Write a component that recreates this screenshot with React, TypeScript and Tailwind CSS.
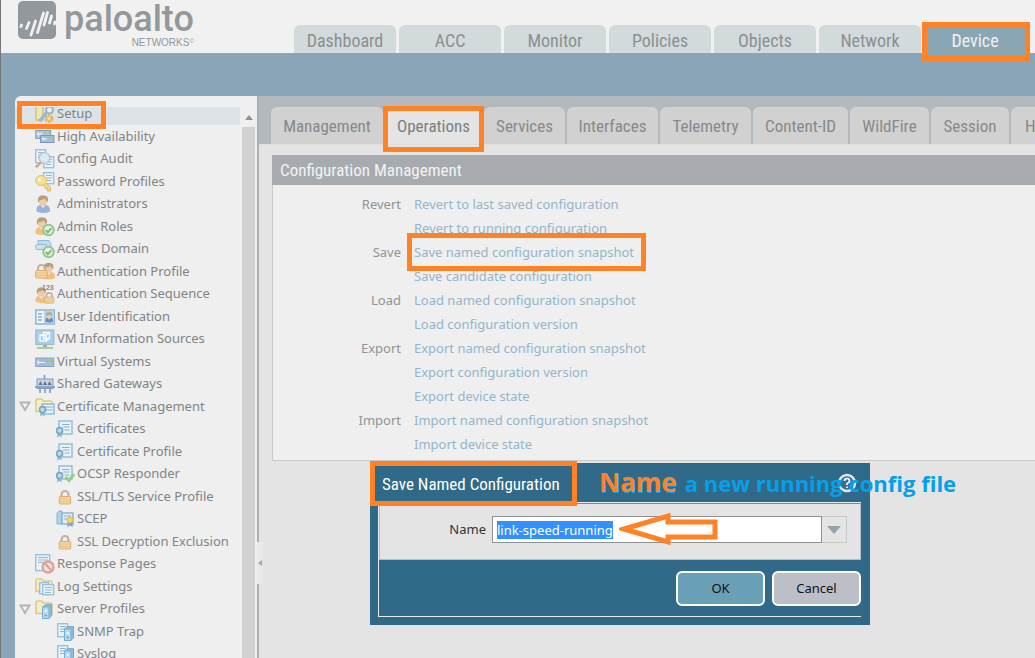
import React, { useEffect, useRef } from 'react';
import clsx from 'clsx';

type IconName =
  | 'setup' | 'ha' | 'audit' | 'password' | 'admin' | 'roles' | 'domain' | 'authProfile'
  | 'authSequence' | 'userId' | 'vm' | 'vsys' | 'gateways' | 'certFolder' | 'cert' | 'ocsp'
  | 'lock' | 'scep' | 'response' | 'log' | 'serverFolder' | 'trap';

interface TreeNode {
  label: string;
  icon: IconName;
  child?: boolean;
  open?: boolean;
}

const tree: TreeNode[] = [
  { label: 'Setup', icon: 'setup' },
  { label: 'High Availability', icon: 'ha' },
  { label: 'Config Audit', icon: 'audit' },
  { label: 'Password Profiles', icon: 'password' },
  { label: 'Administrators', icon: 'admin' },
  { label: 'Admin Roles', icon: 'roles' },
  { label: 'Access Domain', icon: 'domain' },
  { label: 'Authentication Profile', icon: 'authProfile' },
  { label: 'Authentication Sequence', icon: 'authSequence' },
  { label: 'User Identification', icon: 'userId' },
  { label: 'VM Information Sources', icon: 'vm' },
  { label: 'Virtual Systems', icon: 'vsys' },
  { label: 'Shared Gateways', icon: 'gateways' },
  { label: 'Certificate Management', icon: 'certFolder', open: true },
  { label: 'Certificates', icon: 'cert', child: true },
  { label: 'Certificate Profile', icon: 'cert', child: true },
  { label: 'OCSP Responder', icon: 'ocsp', child: true },
  { label: 'SSL/TLS Service Profile', icon: 'lock', child: true },
  { label: 'SCEP', icon: 'scep', child: true },
  { label: 'SSL Decryption Exclusion', icon: 'lock', child: true },
  { label: 'Response Pages', icon: 'response' },
  { label: 'Log Settings', icon: 'log' },
  { label: 'Server Profiles', icon: 'serverFolder', open: true },
  { label: 'SNMP Trap', icon: 'trap', child: true },
  { label: 'Syslog', icon: 'trap', child: true },
];

const mainTabs = ['Dashboard', 'ACC', 'Monitor', 'Policies', 'Objects', 'Network', 'Device'];

const subTabs = [
  { label: 'Management', width: 'w-[112px]' },
  { label: 'Operations', width: 'w-[97px]' },
  { label: 'Services', width: 'w-[81px]' },
  { label: 'Interfaces', width: 'w-[91px]' },
  { label: 'Telemetry', width: 'w-[91px]' },
  { label: 'Content-ID', width: 'w-[95px]' },
  { label: 'WildFire', width: 'w-[79px]' },
  { label: 'Session', width: 'w-[78px]' },
  { label: 'HSM', width: 'w-[60px]' },
];

const operations = [
  { group: 'Revert', links: ['Revert to last saved configuration', 'Revert to running configuration'] },
  { group: 'Save', links: ['Save named configuration snapshot', 'Save candidate configuration'] },
  { group: 'Load', links: ['Load named configuration snapshot', 'Load configuration version'] },
  {
    group: 'Export',
    links: ['Export named configuration snapshot', 'Export configuration version', 'Export device state'],
  },
  { group: 'Import', links: ['Import named configuration snapshot', 'Import device state'] },
];

const narrow = "font-['Roboto_Condensed','Roboto',sans-serif]";

/* small shapes shared by the tree icons */

function Doc({ x, y, w = 10, h = 12 }: { x: number; y: number; w?: number; h?: number }) {
  return (
    <g transform={`translate(${x} ${y})`}>
      <rect x=".7" y=".7" width={w - 1} height={h - 1} fill="#e9f3f9" stroke="#8dbbd8" strokeWidth="1.3" />
      <path d={`M3 3.5h${w - 5}M3 6h${w - 5}M3 8.5h${w - 6}`} stroke="#8fb2cb" strokeWidth="1.1" />
    </g>
  );
}

function Ribbon({ x, y }: { x: number; y: number }) {
  return (
    <g transform={`translate(${x} ${y})`}>
      <path d="M1.5 5.5 1 10.5l2.2-1.6 2.6 1.6-.6-5z" fill="#86b4d2" />
      <circle cx="3.6" cy="3.6" r="3" fill="#b9d7e8" stroke="#6a9fc0" strokeWidth="1.6" />
    </g>
  );
}

function CertDoc() {
  return (
    <>
      <rect x="3" y="2" width="13" height="13" fill="#e9f3f9" stroke="#8dbbd8" strokeWidth="1.5" />
      <path d="M6 5.5h7.5M7 8h6.5M8.5 11h5" stroke="#7ea9c6" strokeWidth="1.1" />
      <Ribbon x={0} y={8} />
    </>
  );
}

function Folder() {
  return (
    <path
      d="M1 14.5V3.5Q1 2 2.500 2h4L8.500 4h7q1.500 0 1.500 1.500v9z"
      fill="#f6edbf"
      stroke="#d9c880"
      strokeWidth="1.6"
    />
  );
}

function Padlock({ x, y }: { x: number; y: number }) {
  return (
    <g transform={`translate(${x} ${y})`}>
      <path d="M3 7V4.500a3.500 3.500 0 0 1 7 0V7" fill="none" stroke="#b9ada0" strokeWidth="2.200" />
      <rect x=".7" y="6.500" width="11.500" height="7.500" rx="1" fill="#f5d596" stroke="#d9a55f" />
      <path d="M1.500 9h10M1.500 11.500h10" stroke="#e6b970" strokeWidth=".9" />
    </g>
  );
}

function Person({ x, y, shirt }: { x: number; y: number; shirt: string }) {
  return (
    <g transform={`translate(${x} ${y})`}>
      <path d="M.500 16.500q-.500-6.500 4.500-6.500h4q5.500.500 5 6.500-6.500 3-13.500 0z" fill={shirt} />
      <path d="M4.500 10 7 13l2.500-3z" fill="#eef2f5" />
      <ellipse cx="7" cy="6" rx="4.300" ry="5" fill="#eac9a2" />
      <path d="M2.200 8Q.500.300 7 .300T11.800 7Q9.500 5 8.500 3.500 6 5.500 3.800 5z" fill="#b69474" />
    </g>
  );
}

function CheckBadge({ x, y }: { x: number; y: number }) {
  return (
    <g transform={`translate(${x} ${y})`}>
      <circle cx="6" cy="6" r="5.200" fill="#eaf3e7" stroke="#8fc08e" strokeWidth="2" />
      <path d="m3.300 6 2 2.300 3.500-4" fill="none" stroke="#79ba6c" strokeWidth="2.200" />
    </g>
  );
}

function ServerBox({ x, y }: { x: number; y: number }) {
  return (
    <g transform={`translate(${x} ${y})`}>
      <path d="M1 3 4 .700h6v11L7.500 14.500H1z" fill="#83b9dc" stroke="#629fc9" />
      <path d="M1 3h6.500v11.500H1z" fill="#b3d7ec" stroke="#69a7cf" />
      <circle cx="4.200" cy="7" r="1.100" fill="#fff" />
      <circle cx="4.200" cy="11.500" r="1.100" fill="#5d93bb" />
    </g>
  );
}

function iconBody(name: IconName) {
  switch (name) {
    case 'setup':
      return (
        <>
          <path d="M1 2v14h7V2z" fill="#f3e7b0" stroke="#d9c06c" strokeWidth="1.500" />
          <path d="M5.500 16 13 7" stroke="#8fb5d8" strokeWidth="3.500" strokeLinecap="round" />
          <circle cx="14.500" cy="6" r="3.500" fill="#edf2f5" stroke="#8fb5d8" strokeWidth="2.200" />
          <circle cx="14" cy="14.500" r="3" fill="#f3dfa3" stroke="#dbb260" strokeWidth="3" strokeDasharray="2.400 .8" />
        </>
      );
    case 'ha':
      return (
        <>
          <rect x=".7" y="3.500" width="15" height="8" fill="#a9c2dd" stroke="#7897bd" />
          <rect x="5.500" y="8.500" width="13.500" height="7" fill="#9cb9da" stroke="#6e8fb8" />
          <path d="M3 5.500v3M3 7h4M8 10.500v3M8 12h4" stroke="#fff" />
          <path d="M9 5.500h2.500m1.500 0h2M14 11h1.500m1.500 0h1.500" stroke="#86cf58" strokeWidth="2" />
        </>
      );
    case 'audit':
      return (
        <>
          <Doc x={0} y={0} w={11} h={14} />
          <Doc x={8} y={7} w={11} h={12} />
          <path d="m6.500 13-5 4.500" stroke="#d5a06c" strokeWidth="2.500" strokeLinecap="round" />
          <circle cx="9.500" cy="9" r="5.300" fill="#dcebf4" fillOpacity=".9" stroke="#b3c4d1" strokeWidth="1.600" />
        </>
      );
    case 'password':
      return (
        <>
          <Doc x={8} y={0} w={11} h={12} />
          <path d="m8 9 7.500 6v4h-3v-2.500l-2.500-.2v-2L6 12z" fill="#f3d877" stroke="#dcb956" />
          <ellipse cx="6" cy="8.500" rx="5.500" ry="5" fill="#f6de86" stroke="#dfbd5c" />
          <circle cx="4.500" cy="7.500" r="1.400" fill="#fff" />
        </>
      );
    case 'admin':
      return <Person x={1} y={1} shirt="#8eaede" />;
    case 'roles':
      return (
        <>
          <Person x={0} y={0} shirt="#f0bd78" />
          <CheckBadge x={7.500} y={7} />
        </>
      );
    case 'domain':
      return (
        <>
          <path d="M3 1.500h11l2 4v2H5l-2-3z" fill="#bddbed" stroke="#86b5d4" />
          <rect x=".7" y="5.500" width="11" height="5" rx="1.500" fill="#c8e1ef" stroke="#86b5d4" />
          <CheckBadge x={7.500} y={7} />
        </>
      );
    case 'authProfile':
      return (
        <>
          <g transform="translate(7 .500) scale(.95)"><Person x={0} y={0} shirt="#f2b978" /></g>
          <Padlock x={0} y={2} />
        </>
      );
    case 'authSequence':
      return (
        <>
          <g transform="translate(0 3) scale(.9)"><Person x={0} y={0} shirt="#f2b978" /></g>
          <g transform="translate(9 8) scale(.8)"><Padlock x={0} y={0} /></g>
          <text x="7" y="6" fontSize="7" fontWeight="700" fontFamily="Liberation Sans" fill="#7d7d7d">123</text>
        </>
      );
    case 'userId':
      return (
        <>
          <rect x=".8" y="3" width="18.500" height="14" fill="#edf5f9" stroke="#7fb3d3" strokeWidth="1.500" />
          <path d="M3 7h4M3 10h4M3 13h4" stroke="#87a9c2" strokeWidth="1.300" />
          <rect x="9" y="4" width="9.500" height="12" fill="#b0cfe3" />
          <g transform="translate(10 5) scale(.58)"><Person x={0} y={0} shirt="#5b86b8" /></g>
        </>
      );
    case 'vm':
      return (
        <>
          <rect x=".8" y="1" width="18" height="14.500" fill="#9ecdf2" stroke="#a5b3c0" strokeWidth="1.300" />
          <path d="M5 6h6v6H5zM8.500 3.500h6v6h-6zM11 6l3.500-2.500M11 12l3.500-2.500" fill="none" stroke="#fff" strokeWidth="1.400" />
          <path d="M8 16h4v2H8z" fill="#a2a9ae" />
          <path d="M2 19h16" stroke="#9ccf91" strokeWidth="2" />
        </>
      );
    case 'vsys':
      return (
        <>
          <rect x=".7" y="6" width="18" height="8.500" fill="#9db6da" stroke="#8099c4" />
          <path d="M3 8.500v4M3 10.500h7" stroke="#f0f5fa" strokeWidth="1.200" />
          <path d="M11.500 8.500H14m1 0h2.500" stroke="#83cb61" strokeWidth="1.800" />
        </>
      );
    case 'gateways':
      return (
        <>
          <path d="M9.500 1v5M5 14v5M10 14v5M15 14v5" stroke="#729ac9" strokeWidth="1.700" />
          <rect x="2" y="5" width="16" height="9.500" fill="#c2d3e5" stroke="#7393bd" />
          <path d="m3.500 11 2-4 2 4zm4.500 0 2-4 2 4zm4.500 0 2-4 2 4z" fill="#50687f" />
          <path d="M0 13h20" stroke="#7897c0" strokeWidth="1.800" />
        </>
      );
    case 'certFolder':
      return (
        <>
          <Folder />
          <rect x="7" y="7" width="12" height="10" fill="#e3f0f8" stroke="#86b8d8" strokeWidth="1.500" />
          <path d="M9.500 10h8M11 13h6.500" stroke="#7ea9c6" strokeWidth="1.200" />
          <Ribbon x={4} y={9} />
        </>
      );
    case 'cert':
      return <CertDoc />;
    case 'ocsp':
      return (
        <>
          <CertDoc />
          <path d="m9.500 13 3.500 3.500L18 10" fill="none" stroke="#8ccb7a" strokeWidth="3" />
        </>
      );
    case 'lock':
      return <Padlock x={2.500} y={3} />;
    case 'scep':
      return (
        <>
          <path d="M1 4 3 2h3v13H1z" fill="#a9d1e8" stroke="#73add0" />
          <rect x="6" y="4" width="11" height="11" fill="#e3f0f8" stroke="#73add0" strokeWidth="1.400" />
          <path d="M8 7h7M8 10h4" stroke="#7ea9c6" />
          <path d="m12 13-1 5 3-1.500 3 1.500-1-5z" fill="#6f9fce" />
          <circle cx="14" cy="11" r="3" fill="#f5ce62" stroke="#e2b142" />
        </>
      );
    case 'response':
      return (
        <>
          <Doc x={0} y={0} w={15} h={17} />
          <circle cx="13" cy="13" r="5.500" fill="#f2dfdd" stroke="#dc9995" strokeWidth="2.300" />
          <path d="m9.500 9 7.500 8" stroke="#dc9995" strokeWidth="2.200" />
        </>
      );
    case 'log':
      return (
        <>
          <Folder />
          <Doc x={4} y={5} w={10} h={12} />
          <Doc x={7} y={7} w={12} h={11} />
        </>
      );
    case 'serverFolder':
      return (
        <>
          <Folder />
          <ServerBox x={6.500} y={5} />
        </>
      );
    case 'trap':
      return (
        <>
          <Doc x={1} y={1} w={11} h={14} />
          <ServerBox x={7.500} y={4} />
        </>
      );
  }
}

function TreeIcon({ name }: { name: IconName }) {
  return (
    <svg viewBox="0 0 20 20" className="h-5 w-5 shrink-0 opacity-90" aria-hidden="true">
      {iconBody(name)}
    </svg>
  );
}

function Logo() {
  return (
    <div className="flex w-[275px] shrink-0 items-start gap-2 self-start text-[#92989c]">
      <svg viewBox="0 0 38 38" className="mt-px h-[38px] w-[38px]" aria-hidden="true">
        <rect width="38" height="38" rx="5" fill="currentColor" />
        <path
          d="M3 25.500 3.500 24M8.500 27.500l2.500-6M13 34l4.500-14M19.500 31.500l6-19.500M26 24l3.500-12.500M31.500 22l2-7M36.500 23l.500-2"
          stroke="#f1f1f1"
          strokeWidth="2.800"
          strokeLinecap="round"
        />
      </svg>
      <div className="flex flex-col items-end pt-px">
        <span className="font-[Roboto,sans-serif] text-[36px] leading-9 font-medium">paloalto</span>
        <span className="flex items-start font-['Liberation_Sans',sans-serif] text-[10px] leading-3">
          NETWORKS<span className="text-[6px] leading-2">©</span>
        </span>
      </div>
    </div>
  );
}

function Highlight({ className }: { className: string }) {
  return <span className={clsx('pointer-events-none absolute border-[5px] border-[#ff8227]', className)} />;
}

function Header() {
  return (
    <header className="flex h-[53px] shrink-0 items-end bg-[#f1f1f1] pl-[17px]">
      <Logo />
      <nav className={clsx('flex gap-[3px] pl-px text-[18px]', narrow)}>
        {mainTabs.map((tab) => {
          const active = tab === 'Device';
          return (
            <button
              key={tab}
              type="button"
              className={clsx(
                'relative isolate h-7 w-[102px] shrink-0 rounded-t-md pt-1 leading-6',
                active ? 'z-10 text-[#f1f1f1]' : 'bg-[#d3dadc] text-[#8b8f91]'
              )}
            >
              {tab}
              {active && <Highlight className="-top-[3px] -right-1 -bottom-2 -left-[2px] -z-10 bg-[#8aa5b3]" />}
            </button>
          );
        })}
      </nav>
    </header>
  );
}

function Sidebar() {
  return (
    <aside className="relative flex w-[242px] shrink-0 rounded-tl-md bg-[#efefef] pt-[11px]">
      <ul className="min-w-0 flex-1 overflow-hidden text-[#808487]">
        {tree.map((node, i) => (
          <li
            key={node.label}
            className={clsx(
              'flex h-[22px] items-center first:-mt-1 even:h-[23px]',
              i === 0 && 'bg-[#dde2e7]',
              node.child ? 'pl-[41px]' : 'pl-1'
            )}
          >
            {!node.child && (
              <span className="flex w-4 shrink-0 justify-start">
                {node.open && (
                  <svg viewBox="0 0 12 11" className="h-[11px] w-3" aria-hidden="true">
                    <path d="M1.500 1.500h9L6 9z" fill="#f3f3f3" stroke="#b3b3b3" strokeWidth="1.800" />
                  </svg>
                )}
              </span>
            )}
            <a href="#" className={clsx('flex items-center whitespace-nowrap', node.child ? 'gap-px' : 'gap-[2px]')}>
              <TreeIcon name={node.icon} />
              {node.label}
            </a>
          </li>
        ))}
      </ul>
      <div className="flex w-[17px] flex-col items-center">
        <span className="flex h-5 items-center">
          <svg viewBox="0 0 8 5" className="h-[5px] w-2" aria-hidden="true">
            <path d="M0 5 4 0l4 5z" fill="#939393" />
          </svg>
        </span>
        <span className="w-[13px] flex-1 bg-[#d1d1d1]" />
      </div>
      <Highlight className="top-[5px] left-[2px] h-7 w-[89px]" />
    </aside>
  );
}

function Splitter() {
  return (
    <div className="relative w-[2px] shrink-0 bg-[#a9aeb5]">
      <button
        type="button"
        aria-label="Collapse navigation"
        className="absolute top-[446px] left-0 z-10 flex h-[42px] w-[6px] items-center justify-center bg-[#e9e9e9]"
      >
        <svg viewBox="0 0 4 6" className="h-[6px] w-1" aria-hidden="true">
          <path d="M4 0v6L0 3z" fill="#a5a8aa" />
        </svg>
      </button>
    </div>
  );
}

function ConfigurationPanel() {
  return (
    <section className="mt-[10px] ml-[13px]">
      <h2 className={clsx('h-[30px] bg-[#a7abaf] px-2 text-[17px] leading-[30px] text-[#f3f3f3]', narrow)}>
        Configuration Management
      </h2>
      <div className="border-b border-l border-[#c9c9c9] bg-[#efefef] pt-[7px] pb-1">
        {operations.map(({ group, links }) => (
          <div key={group} className="flex gap-[13px] leading-6">
            <h3 className="w-[128px] shrink-0 text-right text-[#919497]">{group}</h3>
            <ul>
              {links.map((link) => (
                <li key={link}>
                  <a href="#" className="relative inline-block whitespace-nowrap align-top text-[#95b5ca]">
                    {link}
                    {link === 'Save named configuration snapshot' && (
                      <Highlight className="-inset-y-[7px] -right-3 -left-[7px] z-10" />
                    )}
                  </a>
                </li>
              ))}
            </ul>
          </div>
        ))}
      </div>
    </section>
  );
}

function SaveDialog() {
  const inputRef = useRef<HTMLInputElement>(null);

  useEffect(() => {
    inputRef.current?.focus();
    inputRef.current?.select();
  }, []);

  return (
    <div
      role="dialog"
      aria-labelledby="dialog-title"
      className="absolute top-[367px] left-[111px] z-20 w-[500px] bg-[#306a88] pr-[9px] pb-2 pl-2"
    >
      <div className="flex h-[39px] items-center justify-between px-1">
        <h2 id="dialog-title" className={clsx('pt-1 text-[17px] text-white', narrow)}>
          Save Named Configuration
        </h2>
        <button type="button" aria-label="Help">
          <svg viewBox="0 0 20 20" className="h-5 w-5" aria-hidden="true">
            <circle cx="10" cy="10" r="8" fill="#356e99" stroke="#dce7ef" strokeWidth="2.500" />
            <path d="M7.500 8q0-2.500 2.500-2.500T12.500 8q0 1.500-2.500 2.500V12M10 13.500v1.500" fill="none" stroke="#fff" strokeWidth="1.700" />
          </svg>
        </button>
      </div>
      <Highlight className="-top-[2px] left-0 h-[45px] w-[207px]" />

      <div className="border-t border-b border-l border-[#e6ecef]">
        <div className="flex items-center border border-t-[#858585] border-r-[#b9bac2] border-b-[#b9bac2] border-l-[#b9bac2] bg-[#e4e4e4] pt-3 pr-[13px] pb-4">
          <label htmlFor="snapshot-name" className="w-[112px] shrink-0 pr-[6px] text-right text-[#333]">
            Name
          </label>
          <input
            id="snapshot-name"
            ref={inputRef}
            type="text"
            defaultValue="link-speed-running"
            className="h-[27px] min-w-0 flex-1 border border-[#8e9093] bg-white px-1 text-[#333] outline-none selection:bg-[#3390ff] selection:text-white"
          />
          <button
            type="button"
            aria-label="Show snapshots"
            className="flex h-[27px] w-[25px] items-center justify-center border border-l-0 border-[#c6c8c9] bg-[#e4e4e4]"
          >
            <svg viewBox="0 0 14 8" className="h-2 w-[14px]" aria-hidden="true">
              <path d="M0 0h14L7 8z" fill="#93a3aa" />
            </svg>
          </button>
        </div>
        <div className="flex justify-end gap-[7px] pt-[11px] pb-[10px]">
          <button type="button" className="h-[35px] w-[89px] rounded-md border-2 border-white bg-[#6a9fb8] text-[#111]">
            OK
          </button>
          <button type="button" className="h-[35px] w-[89px] rounded-md border-2 border-white bg-[#bcbfc7] text-[#111]">
            Cancel
          </button>
        </div>
      </div>

      <p className="pointer-events-none absolute top-[3px] left-[229px] flex items-baseline gap-2 font-['Open_Sans',sans-serif] text-[22px] leading-8 font-bold whitespace-nowrap text-[#06a0ea]">
        <span className="text-[26px] text-[#ff8227] text-shadow-[1px_1px_0_#06a0ea]">Name</span>
        <span>a new running config file</span>
      </p>
      <svg viewBox="0 0 99 34" className="pointer-events-none absolute top-[49px] left-[249px] h-[34px] w-[99px]" aria-hidden="true">
        <path d="M5 17 49 4v6h47v15H49v5z" fill="#fff" stroke="#ff8227" strokeWidth="5" />
      </svg>
    </div>
  );
}

export default function App() {
  return (
    <div className="flex h-screen flex-col overflow-hidden border-l border-[#777] bg-[#8aa5b8] font-['Noto_Sans',sans-serif] text-[13px]">
      <Header />
      <div className="flex min-h-0 flex-1 pt-[43px] pl-[14px]">
        <Sidebar />
        <Splitter />
        <main className="relative min-w-0 flex-1 bg-[#e4e4e4]">
          <nav className={clsx('flex h-[49px] items-end gap-[2px] border-b border-[#dedede] bg-[#b3b9bc] pl-3 text-[17px]', narrow)}>
            {subTabs.map(({ label, width }) => {
              const active = label === 'Operations';
              return (
                <button
                  key={label}
                  type="button"
                  className={clsx(
                    'relative h-[37px] shrink-0 rounded-t-md leading-9',
                    width,
                    active ? 'z-10 bg-[#e4e4e4] text-[#7b7f82]' : 'bg-[#d1d1d1] text-[#85898b]'
                  )}
                >
                  {label}
                  {active && <Highlight className="-inset-x-[2px] -top-px -bottom-2" />}
                </button>
              );
            })}
          </nav>
          <ConfigurationPanel />
          <SaveDialog />
        </main>
      </div>
    </div>
  );
}
